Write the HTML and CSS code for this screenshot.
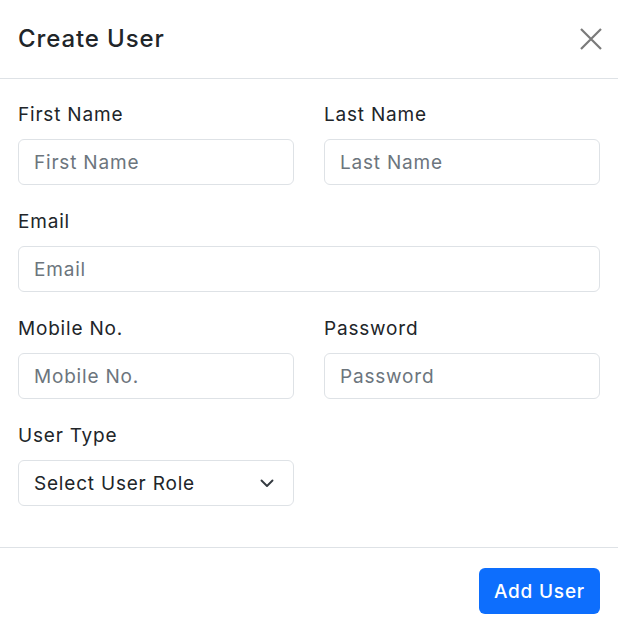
FILE: index.html
```html
<!DOCTYPE html>
<html lang="en">
<head>
<meta charset="utf-8">
<title>Create User</title>
<link rel="stylesheet" href="styles.css">
</head>
<body>
<div class="modal">
  <div class="modal-header">
    <h5 class="modal-title">Create User</h5>
    <button class="btn-close" type="button" aria-label="Close">
      <svg width="22" height="22" viewBox="0 0 22 22"><path d="M1 1 L21 21 M21 1 L1 21" stroke="currentColor" stroke-width="2.2" fill="none"/></svg>
    </button>
  </div>
  <div class="modal-body">
    <div class="form-grid">
      <div class="field">
        <label class="form-label">First Name</label>
        <input class="form-control" type="text" placeholder="First Name">
      </div>
      <div class="field">
        <label class="form-label">Last Name</label>
        <input class="form-control" type="text" placeholder="Last Name">
      </div>
      <div class="field full">
        <label class="form-label">Email</label>
        <input class="form-control" type="email" placeholder="Email">
      </div>
      <div class="field">
        <label class="form-label">Mobile No.</label>
        <input class="form-control" type="text" placeholder="Mobile No.">
      </div>
      <div class="field">
        <label class="form-label">Password</label>
        <input class="form-control" type="password" placeholder="Password">
      </div>
      <div class="field">
        <label class="form-label">User Type</label>
        <div class="select-wrap">
          <select class="form-select">
            <option>Select User Role</option>
          </select>
          <svg class="chevron" width="14" height="9" viewBox="0 0 14 9"><path d="M1.5 1.5 L7 7 L12.5 1.5" stroke="currentColor" stroke-width="1.9" fill="none" stroke-linecap="round" stroke-linejoin="round"/></svg>
        </div>
      </div>
    </div>
  </div>
  <div class="modal-footer">
    <button class="btn-primary" type="button">Add User</button>
  </div>
</div>
</body>
</html>
```
FILE: styles.css
```css
* { box-sizing: border-box; }
html, body { margin: 0; padding: 0; background: #fff; }
body {
  font-family: Inter, "Open Sans", "Liberation Sans", sans-serif;
  color: #212529;
  font-size: 19px;
  letter-spacing: 0.8px;
}
.modal {
  width: 618px;
  background: #fff;
}
.modal-header {
  height: 79px;
  border-bottom: 1px solid #dee2e6;
  display: flex;
  align-items: center;
  justify-content: space-between;
  padding: 0 16px 0 18px;
}
.modal-title {
  margin: 0;
  font-size: 24px;
  font-weight: 500;
  line-height: 1.2;
  letter-spacing: 0.9px;
  color: #212529;
}
.btn-close {
  border: 0;
  background: transparent;
  padding: 0;
  width: 22px;
  height: 22px;
  color: #7a7a7a;
  display: flex;
}
.modal-body {
  padding: 21px 18px 41px;
}
.form-grid {
  display: grid;
  grid-template-columns: 276px 276px;
  column-gap: 30px;
  row-gap: 22px;
}
.field { display: flex; flex-direction: column; }
.field.full { grid-column: 1 / span 2; }
.form-label {
  font-size: 19px;
  line-height: 29px;
  margin-bottom: 10px;
  color: #212529;
}
.form-control, .form-select {
  height: 46px;
  width: 100%;
  border: 1px solid #dee2e6;
  border-radius: 6px;
  padding: 0 15px;
  font-family: inherit;
  font-size: 19px;
  letter-spacing: 0.8px;
  color: #212529;
  background: #fff;
  outline: none;
}
.form-control::placeholder { color: #6c757d; opacity: 1; }
.select-wrap { position: relative; }
.form-select {
  appearance: none;
  -webkit-appearance: none;
}
.chevron {
  position: absolute;
  right: 20px;
  top: 19px;
  color: #343a40;
  pointer-events: none;
}
.modal-footer {
  border-top: 1px solid #dee2e6;
  display: flex;
  justify-content: flex-end;
  padding: 20px 18px;
}
.btn-primary {
  height: 46px;
  padding: 0 15px;
  border: 0;
  border-radius: 6px;
  background: #0d6efd;
  color: #fff;
  font-family: inherit;
  font-size: 19px;
  font-weight: 500;
  letter-spacing: 0.8px;
}
```
